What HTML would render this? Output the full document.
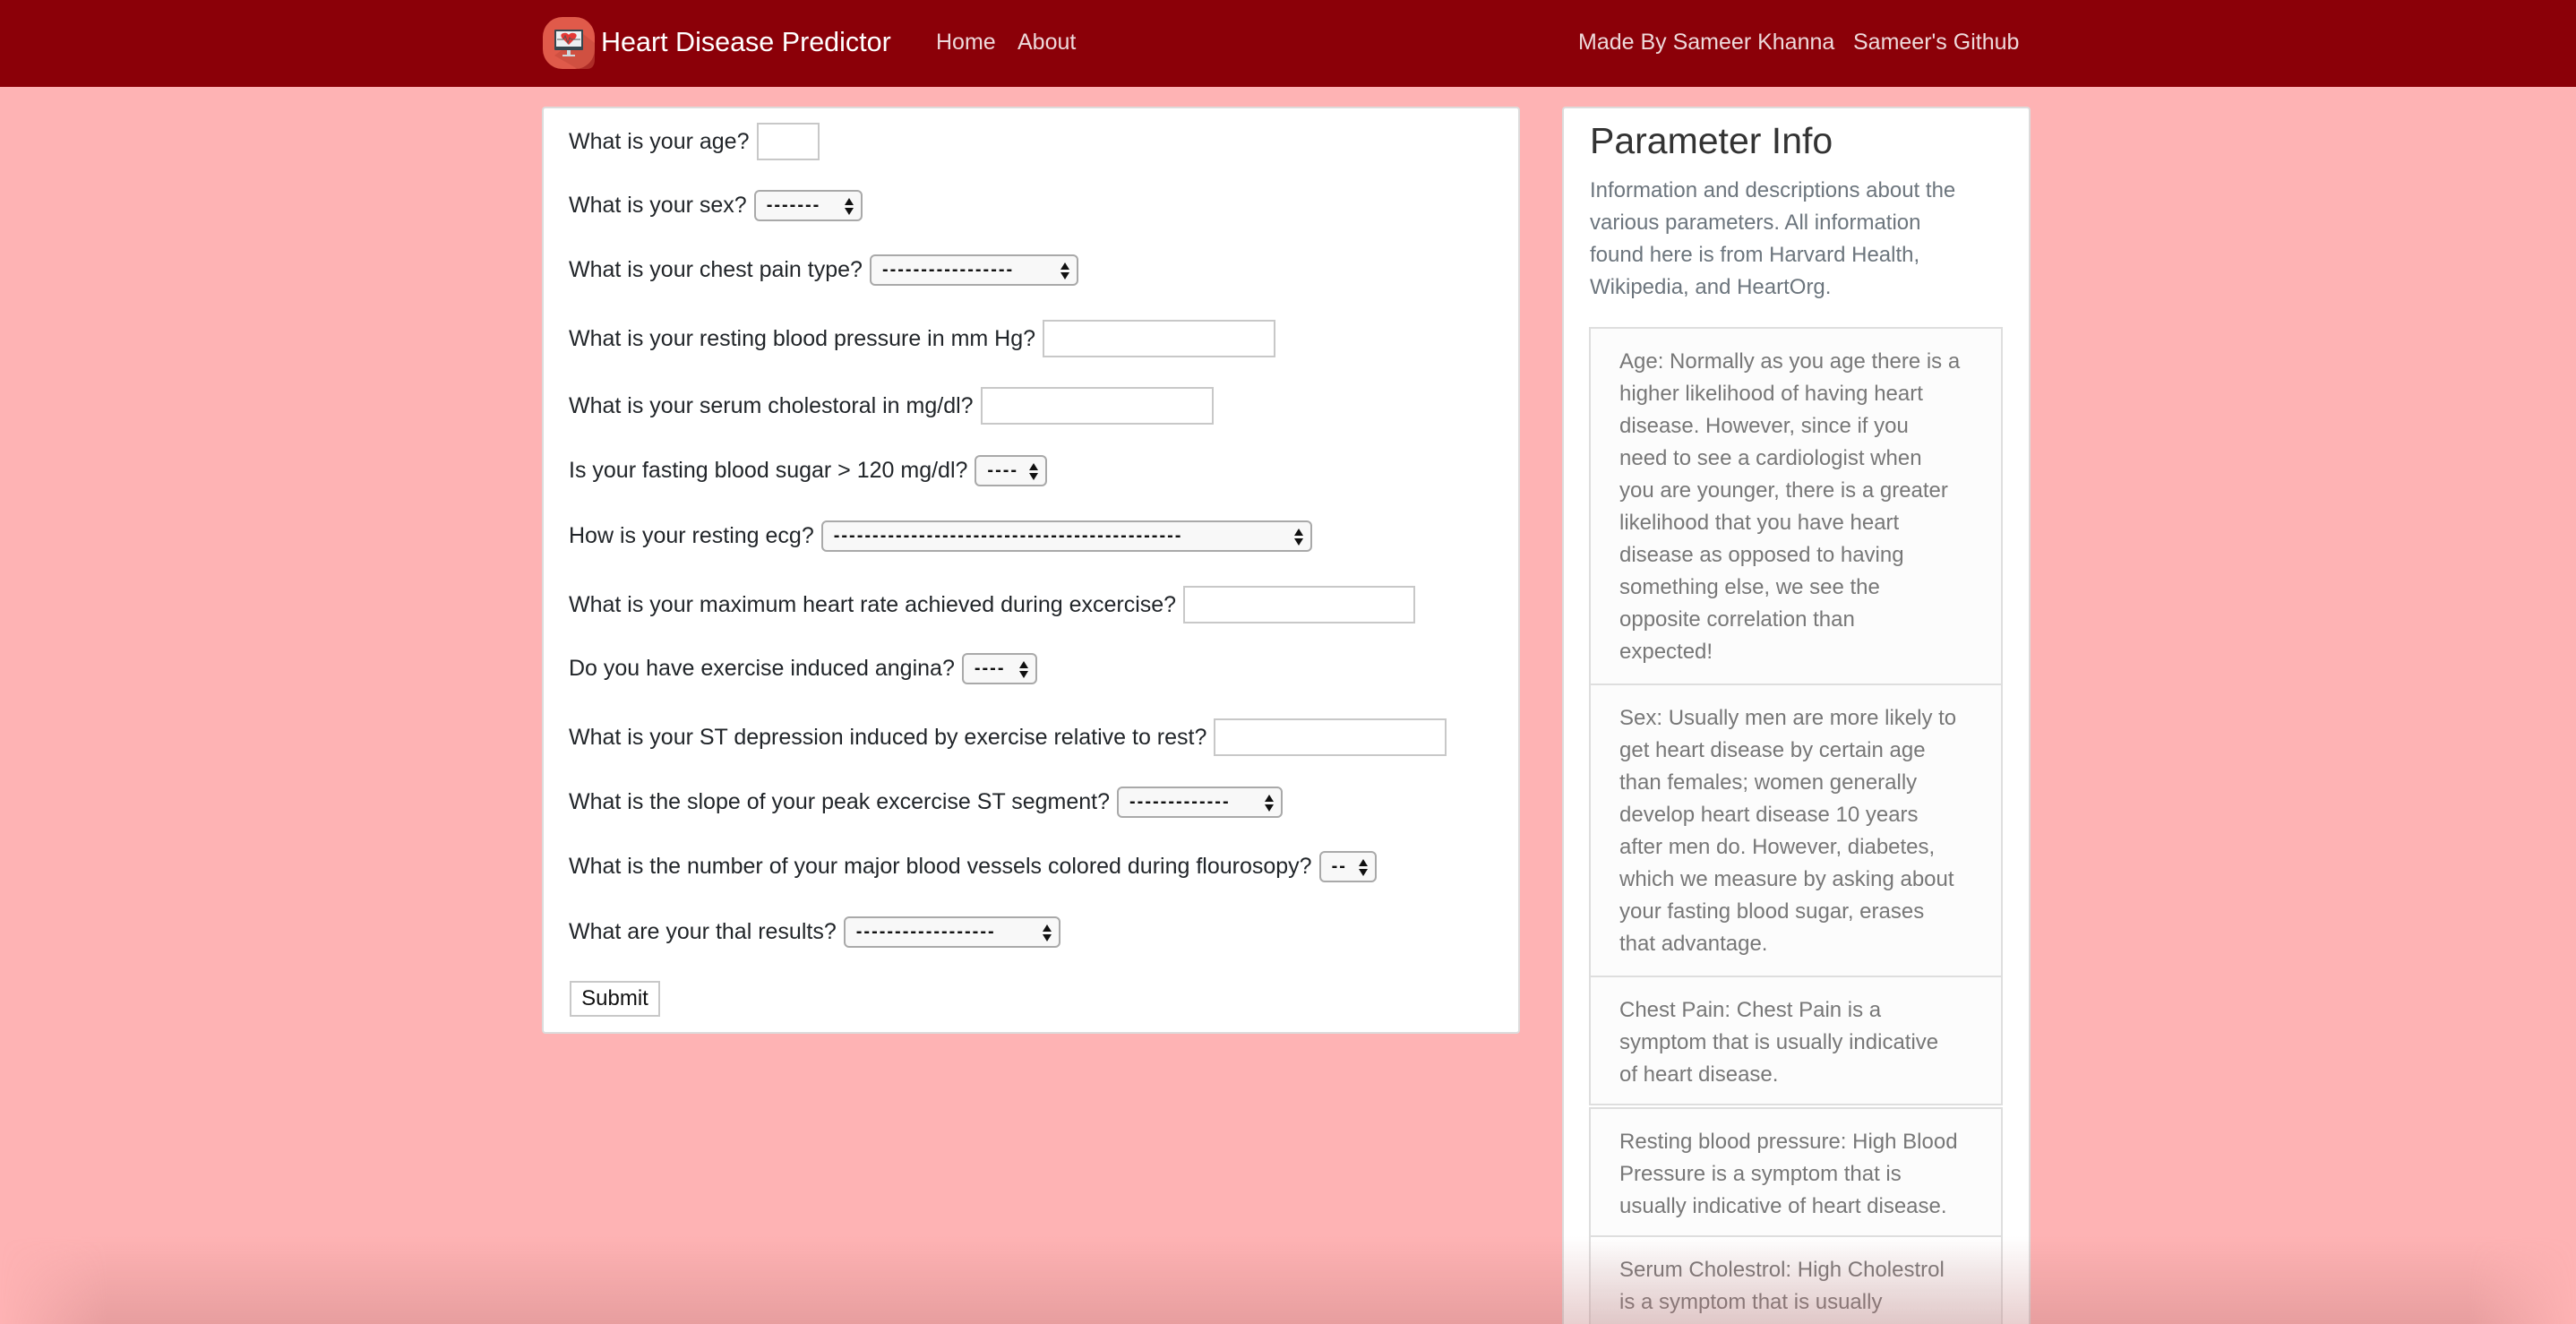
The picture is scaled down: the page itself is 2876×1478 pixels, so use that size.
<!DOCTYPE html>
<html><head><meta charset="utf-8"><style>
*{box-sizing:border-box;margin:0;padding:0}
html,body{width:2876px;height:1478px;overflow:hidden}
body{background:#feb3b4;font-family:"Liberation Sans",Arial,sans-serif;position:relative}
.nav{position:absolute;left:0;top:0;width:2876px;height:97px;background:#8b0008}
.nav .t{position:absolute;top:0;line-height:94px;color:#fff;white-space:nowrap}
.nav .l{position:absolute;top:0;line-height:94px;color:rgba(255,255,255,.85);font-size:25px;white-space:nowrap}
.card{position:absolute;background:#fff;border:2px solid #dcdcdc;border-radius:4px}
.row{position:absolute;left:635px;display:flex;align-items:center;height:44px;font-size:25px;color:#212529;white-space:nowrap}
.in{margin-left:8px;height:42px;border:2px solid #c8c8c8;background:#fff}
.sel{margin-left:8px;height:35px;border:2px solid #a9a9a9;border-radius:6px;background:#f8f8f8;position:relative;font-size:20px;font-weight:bold;color:#111;padding-left:12px;line-height:31px;overflow:hidden;letter-spacing:2px}
.sel:after{content:"";position:absolute;right:8px;top:7px;border:5px solid transparent;border-bottom:8px solid #111;border-top:0}
.sel:before{content:"";position:absolute;right:8px;top:18px;border:5px solid transparent;border-top:8px solid #111;border-bottom:0}
.btn{position:absolute;left:636px;top:1095px;width:101px;height:40px;border:2px solid #c8c8c8;background:#fff;font-size:24px;text-align:center;line-height:36px;color:#111}
.item{position:absolute;left:1774px;width:462px;border:2px solid #dedede;background:#fcfcfc;padding:19px 0 0 32px;font-size:24px;line-height:36px;color:#777;white-space:nowrap}
.shade{position:absolute;left:0;top:1380px;width:2876px;height:98px;background:linear-gradient(to bottom,rgba(200,120,120,0),rgba(190,120,120,.35));-webkit-mask:linear-gradient(to right,transparent 0,#000 120px,#000 2756px,transparent 2876px)}
</style></head><body>
<div class="nav">
  <svg style="position:absolute;left:605px;top:18px" width="60" height="60" viewBox="0 0 60 60">
    <rect x="1" y="1" width="58" height="58" rx="22" fill="#e05a4a"/>
    <path d="M14 44 L40 59 L50 59 Q59 59 59 48 L59 30 L46 20 Z" fill="#c44a3c" opacity=".6"/>
    <rect x="14" y="15" width="32" height="23" fill="#37474f" rx="1"/>
    <rect x="16" y="17" width="28" height="17" fill="#eceff1"/>
    <path d="M30 32 L22 24 Q20 20 24 19 Q28 18 30 21 Q32 18 36 19 Q40 20 38 24 Z" fill="#e53935"/>
    <path d="M17 26 L24 26 L26 22 L29 30 L31 24 L33 26 L43 26" stroke="#555" stroke-width="1" fill="none"/>
    <rect x="28" y="38" width="4" height="5" fill="#cfd8dc"/>
    <rect x="23" y="43" width="14" height="2" fill="#cfd8dc"/>
  </svg>
  <div class="t" style="left:671px;font-size:30.5px">Heart Disease Predictor</div>
  <div class="l" style="left:1045px">Home</div>
  <div class="l" style="left:1136px">About</div>
  <div class="l" style="left:1762px">Made By Sameer Khanna</div>
  <div class="l" style="left:2069px">Sameer's Github</div>
</div>

<div class="card" style="left:605px;top:119px;width:1092px;height:1035px"></div>
<div class="row" style="top:136px">What is your age?<div class="in" style="width:70px"></div></div>
<div class="row" style="top:207px">What is your sex?<div class="sel" style="width:121px">-------</div></div>
<div class="row" style="top:279px">What is your chest pain type?<div class="sel" style="width:233px">-----------------</div></div>
<div class="row" style="top:356px">What is your resting blood pressure in mm Hg?<div class="in" style="width:260px"></div></div>
<div class="row" style="top:431px">What is your serum cholestoral in mg/dl?<div class="in" style="width:260px"></div></div>
<div class="row" style="top:503px">Is your fasting blood sugar &gt; 120 mg/dl?<div class="sel" style="width:81px">----</div></div>
<div class="row" style="top:576px">How is your resting ecg?<div class="sel" style="width:548px">---------------------------------------------</div></div>
<div class="row" style="top:653px">What is your maximum heart rate achieved during excercise?<div class="in" style="width:259px"></div></div>
<div class="row" style="top:724px">Do you have exercise induced angina?<div class="sel" style="width:84px">----</div></div>
<div class="row" style="top:801px">What is your ST depression induced by exercise relative to rest?<div class="in" style="width:260px"></div></div>
<div class="row" style="top:873px">What is the slope of your peak excercise ST segment?<div class="sel" style="width:185px">-------------</div></div>
<div class="row" style="top:945px">What is the number of your major blood vessels colored during flourosopy?<div class="sel" style="width:64px">--</div></div>
<div class="row" style="top:1018px">What are your thal results?<div class="sel" style="width:242px">------------------</div></div>
<div class="btn">Submit</div>

<div class="card" style="left:1744px;top:119px;width:523px;height:1400px"></div>
<div style="position:absolute;left:1775px;top:134px;font-size:41px;color:#333;white-space:nowrap;font-weight:500">Parameter Info</div>
<div style="position:absolute;left:1775px;top:195px;font-size:24px;line-height:36px;color:#6c757d;white-space:nowrap">Information and descriptions about the<br>various parameters. All information<br>found here is from Harvard Health,<br>Wikipedia, and HeartOrg.</div>

<div class="item" style="top:365px;height:400px">Age: Normally as you age there is a<br>higher likelihood of having heart<br>disease. However, since if you<br>need to see a cardiologist when<br>you are younger, there is a greater<br>likelihood that you have heart<br>disease as opposed to having<br>something else, we see the<br>opposite correlation than<br>expected!</div>
<div class="item" style="top:763px;height:328px">Sex: Usually men are more likely to<br>get heart disease by certain age<br>than females; women generally<br>develop heart disease 10 years<br>after men do. However, diabetes,<br>which we measure by asking about<br>your fasting blood sugar, erases<br>that advantage.</div>
<div class="item" style="top:1089px;height:145px">Chest Pain: Chest Pain is a<br>symptom that is usually indicative<br>of heart disease.</div>
<div class="item" style="top:1236px;height:145px">Resting blood pressure: High Blood<br>Pressure is a symptom that is<br>usually indicative of heart disease.</div>
<div class="item" style="top:1379px;height:140px;background:linear-gradient(#fff,#eee)">Serum Cholestrol: High Cholestrol<br>is a symptom that is usually</div>
<div class="shade"></div>
</body></html>
